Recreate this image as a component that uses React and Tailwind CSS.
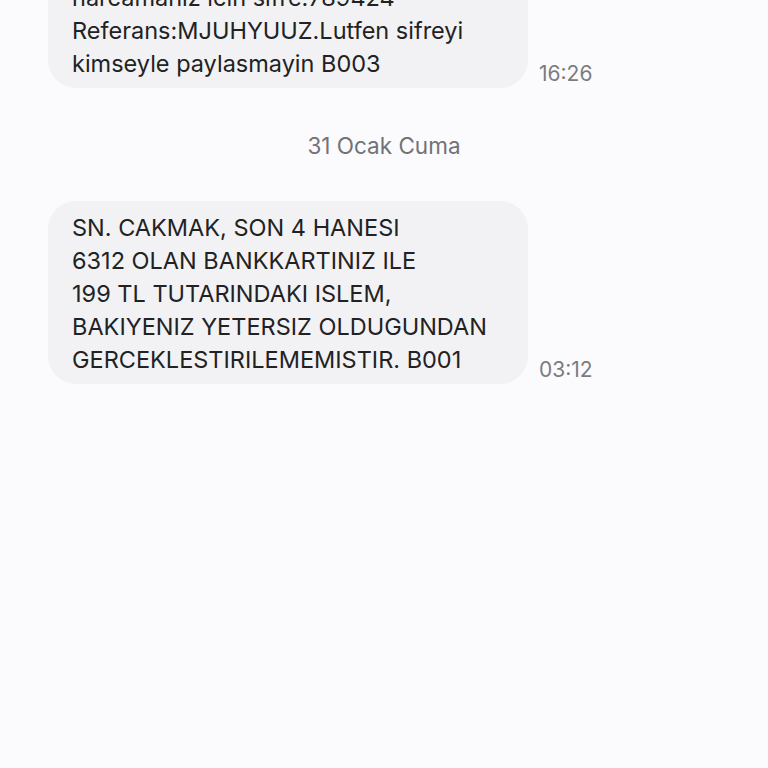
import React from 'react';

const messages = [
    {
        id: 1,
        lines: ['harcamaniz icin sifre:789424', 'Referans:MJUHYUUZ.Lutfen sifreyi', 'kimseyle paylasmayin B003'],
        time: '16:26',
    },
    {
        id: 2,
        date: '31 Ocak Cuma',
        lines: [
            'SN. CAKMAK, SON 4 HANESI',
            '6312 OLAN BANKKARTINIZ ILE',
            '199 TL TUTARINDAKI ISLEM,',
            'BAKIYENIZ YETERSIZ OLDUGUNDAN',
            'GERCEKLESTIRILEMEMISTIR. B001',
        ],
        time: '03:12',
    },
];

const Bubble = ({ msg }) => (
    <div className="flex items-end pl-12">
        <div className="w-[480px] bg-[#f2f2f4] rounded-[28px] pl-6 pr-4 pt-[10px] pb-[8px] text-[23.5px] leading-[33px] text-[#222224]">
            {msg.lines.map((line, i) => (
                <div key={i}>{line}</div>
            ))}
        </div>
        <span className="ml-[11px] mb-0 text-[21px] leading-[28px] text-[#7b7b80]">{msg.time}</span>
    </div>
);

const App = () => {
    return (
        <div className="w-[768px] h-[768px] overflow-hidden bg-[#fbfbfd]" style={{ fontFamily: 'Inter, "Noto Sans", sans-serif' }}>
            <div className="flex flex-col mt-[-29px]">
                {messages.map(msg => (
                    <React.Fragment key={msg.id}>
                        {msg.date && (
                            <div className="text-center text-[22.5px] leading-[28px] text-[#727277] mt-[44px] mb-[41px]">
                                {msg.date}
                            </div>
                        )}
                        <Bubble msg={msg} />
                    </React.Fragment>
                ))}
            </div>
        </div>
    );
};

export default App;
